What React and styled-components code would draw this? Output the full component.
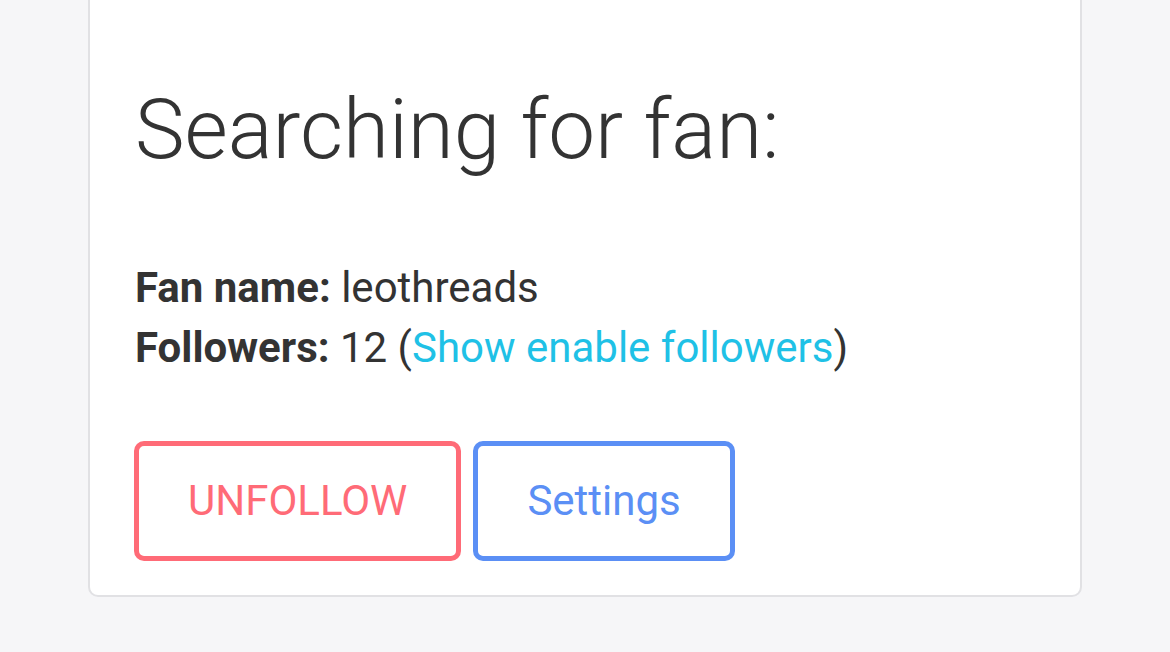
import React from 'react';
import styled, { createGlobalStyle } from 'styled-components';

const GlobalStyle = createGlobalStyle`
  html, body {
    margin: 0;
    padding: 0;
    background: #f6f6f8;
    font-family: Roboto, "Noto Sans", sans-serif;
    color: #333333;
  }
`;

const Page = styled.div`
  padding: 0 88px;
  height: 652px;
  overflow: hidden;
`;

const Card = styled.div`
  margin-top: -20px;
  background: #ffffff;
  border: 2px solid #e1e1e4;
  border-radius: 10px;
  padding: 97px 45px 34px 45px;
`;

const Title = styled.h1`
  margin: 0 0 79px;
  font-size: 83.6px;
  font-weight: 300;
  line-height: 100px;
  color: #333333;
`;

const Info = styled.div`
  font-size: 42px;
  line-height: 60px;
`;

const Label = styled.strong`
  font-weight: 700;
`;

const LinkText = styled.a`
  color: #1fc1e6;
  text-decoration: none;
  cursor: pointer;
`;

const Actions = styled.div`
  display: flex;
  gap: 12px;
  margin-top: 63px;
  margin-left: -1px;
`;

const Button = styled.button`
  font-family: Roboto, "Noto Sans", sans-serif;
  font-size: 42px;
  line-height: 60px;
  padding: 25px 49px;
  background: #ffffff;
  border: 5px solid ${(p) => p.color};
  color: ${(p) => p.color};
  border-radius: 10px;
  cursor: pointer;
`;

export default function App() {
  return (
    <>
      <GlobalStyle />
      <Page>
        <Card>
          <Title>Searching for fan:</Title>
          <Info>
            <div>
              <Label>Fan name:</Label> leothreads
            </div>
            <div>
              <Label>Followers:</Label> 12 (<LinkText>Show enable followers</LinkText>)
            </div>
          </Info>
          <Actions>
            <Button color="#ff6b77">UNFOLLOW</Button>
            <Button color="#5b8ff5">Settings</Button>
          </Actions>
        </Card>
      </Page>
    </>
  );
}
